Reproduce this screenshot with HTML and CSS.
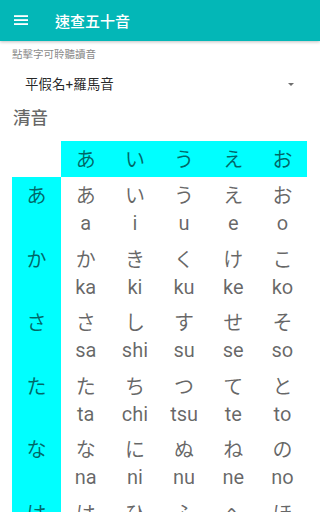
FILE: index.html
```html
<!DOCTYPE html>
<html lang="zh-Hant">
<head>
<meta charset="utf-8">
<title>速查五十音</title>
<link rel="stylesheet" href="styles.css">
</head>
<body>
<header class="toolbar">
  <svg class="menu-icon" width="14" height="11" viewBox="0 0 14 11" aria-hidden="true">
    <rect x="0" y="0.2" width="14" height="1.8" fill="#fff"/>
    <rect x="0" y="4.2" width="14" height="1.8" fill="#fff"/>
    <rect x="0" y="8.2" width="14" height="1.8" fill="#fff"/>
  </svg>
  <h1 class="title">速查五十音</h1>
</header>
<main class="content">
  <p class="hint">點擊字可聆聽讀音</p>
  <div class="spinner">
    <span class="spinner-text">平假名+羅馬音</span>
    <span class="spinner-arrow"></span>
  </div>
  <h2 class="section">清音</h2>
  <div class="table">
    <div class="cell corner"></div>
    <div class="cell head"><span class="kana">あ</span></div>
    <div class="cell head"><span class="kana">い</span></div>
    <div class="cell head"><span class="kana">う</span></div>
    <div class="cell head"><span class="kana">え</span></div>
    <div class="cell head"><span class="kana">お</span></div>

    <div class="cell rowhead"><span class="kana">あ</span></div>
    <div class="cell"><span class="kana">あ</span><span class="roma">a</span></div>
    <div class="cell"><span class="kana">い</span><span class="roma">i</span></div>
    <div class="cell"><span class="kana">う</span><span class="roma">u</span></div>
    <div class="cell"><span class="kana">え</span><span class="roma">e</span></div>
    <div class="cell"><span class="kana">お</span><span class="roma">o</span></div>

    <div class="cell rowhead"><span class="kana">か</span></div>
    <div class="cell"><span class="kana">か</span><span class="roma">ka</span></div>
    <div class="cell"><span class="kana">き</span><span class="roma">ki</span></div>
    <div class="cell"><span class="kana">く</span><span class="roma">ku</span></div>
    <div class="cell"><span class="kana">け</span><span class="roma">ke</span></div>
    <div class="cell"><span class="kana">こ</span><span class="roma">ko</span></div>

    <div class="cell rowhead"><span class="kana">さ</span></div>
    <div class="cell"><span class="kana">さ</span><span class="roma">sa</span></div>
    <div class="cell"><span class="kana">し</span><span class="roma">shi</span></div>
    <div class="cell"><span class="kana">す</span><span class="roma">su</span></div>
    <div class="cell"><span class="kana">せ</span><span class="roma">se</span></div>
    <div class="cell"><span class="kana">そ</span><span class="roma">so</span></div>

    <div class="cell rowhead"><span class="kana">た</span></div>
    <div class="cell"><span class="kana">た</span><span class="roma">ta</span></div>
    <div class="cell"><span class="kana">ち</span><span class="roma">chi</span></div>
    <div class="cell"><span class="kana">つ</span><span class="roma">tsu</span></div>
    <div class="cell"><span class="kana">て</span><span class="roma">te</span></div>
    <div class="cell"><span class="kana">と</span><span class="roma">to</span></div>

    <div class="cell rowhead"><span class="kana">な</span></div>
    <div class="cell"><span class="kana">な</span><span class="roma">na</span></div>
    <div class="cell"><span class="kana">に</span><span class="roma">ni</span></div>
    <div class="cell"><span class="kana">ぬ</span><span class="roma">nu</span></div>
    <div class="cell"><span class="kana">ね</span><span class="roma">ne</span></div>
    <div class="cell"><span class="kana">の</span><span class="roma">no</span></div>

    <div class="cell rowhead"><span class="kana">は</span></div>
    <div class="cell"><span class="kana">は</span><span class="roma">ha</span></div>
    <div class="cell"><span class="kana">ひ</span><span class="roma">hi</span></div>
    <div class="cell"><span class="kana">ふ</span><span class="roma">fu</span></div>
    <div class="cell"><span class="kana">へ</span><span class="roma">he</span></div>
    <div class="cell"><span class="kana">ほ</span><span class="roma">ho</span></div>
  </div>
</main>
</body>
</html>
```

FILE: styles.css
```css
html, body {
  margin: 0;
  padding: 0;
  background: #ffffff;
}

body {
  font-family: Roboto, "Noto Sans CJK TC", sans-serif;
  overflow: hidden;
}

.toolbar {
  height: 41px;
  background: #03b7b7;
  display: flex;
  align-items: center;
  box-shadow: 0 1px 3px rgba(0, 0, 0, 0.25);
  position: relative;
  z-index: 1;
}

.menu-icon {
  margin-left: 14px;
  display: block;
}

.title {
  margin: 0 0 0 27px;
  font-family: "Noto Sans CJK TC", sans-serif;
  font-size: 15px;
  font-weight: 500;
  line-height: 20px;
  color: #ffffff;
}

.content {
  padding-top: 5px;
}

.hint {
  margin: 0;
  padding-left: 12px;
  font-family: "Noto Sans CJK TC", sans-serif;
  font-size: 10.5px;
  line-height: 16px;
  color: rgba(0, 0, 0, 0.5);
}

.spinner {
  margin-top: 12px;
  height: 20px;
  display: flex;
  align-items: center;
  justify-content: space-between;
  padding: 0 26.5px 0 25px;
}

.spinner-text {
  font-family: Roboto, "Noto Sans CJK TC", sans-serif;
  font-size: 13.5px;
  line-height: 20px;
  color: rgba(0, 0, 0, 0.85);
}

.spinner-arrow {
  width: 0;
  height: 0;
  border-left: 3.5px solid transparent;
  border-right: 3.5px solid transparent;
  border-top: 3.5px solid #6f6f6f;
  margin-top: 1px;
}

.section {
  margin: 10.5px 0 0 0;
  padding-left: 13px;
  font-family: "Noto Sans CJK TC", sans-serif;
  font-size: 17.5px;
  font-weight: 500;
  line-height: 24px;
  color: rgba(0, 0, 0, 0.6);
}

.table {
  margin: 12.5px 13px 0 12px;
  display: grid;
  grid-template-columns: repeat(6, 1fr);
}

.cell {
  display: flex;
  flex-direction: column;
  align-items: center;
  padding: 3.4px 0 2.6px;
  height: 63.5px;
  box-sizing: border-box;
  color: rgba(0, 0, 0, 0.6);
}

.cell.corner,
.cell.head {
  height: 36px;
}

.cell.head,
.cell.rowhead {
  background: #00ffff;
}

.kana {
  font-family: "Noto Sans CJK JP", sans-serif;
  font-size: 20px;
  line-height: 30px;
  height: 30px;
}

.roma {
  font-family: Roboto, sans-serif;
  font-size: 20px;
  line-height: 27.5px;
  height: 27.5px;
}
```
